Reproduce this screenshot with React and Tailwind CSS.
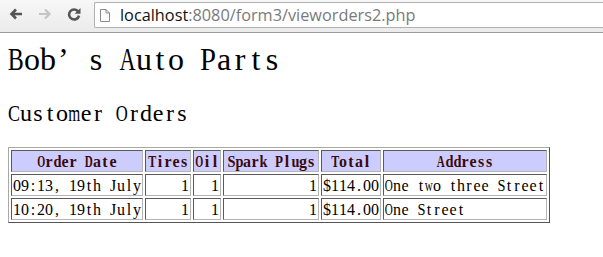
const W = {
  " ": 0.25, ":": 0.278, ",": 0.25, ".": 0.25, "$": 0.5,
  a: 0.444, b: 0.5, c: 0.444, d: 0.5, e: 0.444, g: 0.5, h: 0.5, i: 0.278, k: 0.5,
  l: 0.278, m: 0.778, n: 0.5, o: 0.5, p: 0.5, r: 0.333, s: 0.389, t: 0.278, u: 0.5,
  w: 0.722, y: 0.5,
  A: 0.722, B: 0.667, C: 0.667, D: 0.722, J: 0.389, O: 0.722, P: 0.556, S: 0.556, T: 0.611,
};
const WB = {
  a: 0.5, d: 0.556, e: 0.444, r: 0.444, s: 0.389, t: 0.333, i: 0.278, l: 0.278, o: 0.5,
  p: 0.556, k: 0.556, g: 0.5, u: 0.556,
  O: 0.778, D: 0.722, T: 0.667, S: 0.556, P: 0.611, A: 0.722,
};

function Mono({ text, bold }) {
  return [...text].map((ch, i) => {
    const w = (bold ? WB[ch] : undefined) ?? W[ch] ?? 0.5;
    if (ch === "’") {
      return (
        <span key={i} className="inline-block w-[1em] text-left pl-[0.06em]">
          {ch}
        </span>
      );
    }
    if (w > 0.5) {
      const s = 0.5 / w;
      const m = -(w - 0.5) / 2;
      return (
        <span key={i} className="inline-block w-[0.5em] text-center">
          <span
            className="inline-block"
            style={{ transform: `scaleX(${s.toFixed(3)})`, marginLeft: `${m.toFixed(3)}em`, marginRight: `${m.toFixed(3)}em` }}
          >
            {ch}
          </span>
        </span>
      );
    }
    return (
      <span key={i} className="inline-block w-[0.5em] text-center">
        {ch === " " ? "\u00a0" : ch}
      </span>
    );
  });
}

export default function App() {
  const serif = { fontFamily: '"Liberation Serif", "DejaVu Serif", serif' };
  const th =
    "bg-[#ccccff] text-[#3b0a0a] font-bold text-center whitespace-nowrap overflow-hidden border border-t-[#5a5a5a] border-l-[#5a5a5a] border-b-[#b4b4b4] border-r-[#b4b4b4] px-[1px] pt-[2px] pb-[1px] leading-[17px] text-[16px]";
  const td =
    "whitespace-nowrap overflow-hidden border border-t-[#5a5a5a] border-l-[#5a5a5a] border-b-[#b4b4b4] border-r-[#b4b4b4] px-[1px] pt-[2px] pb-[1px] leading-[17px] text-[16px] text-black";
  const rows = [
    ["09:13, 19th July", "1", "1", "1", "$114.00", "One two three Street"],
    ["10:20, 19th July", "1", "1", "1", "$114.00", "One Street"],
  ];
  const heads = [
    ["Order Date", "w-[132px]"],
    ["Tires", "w-[46px]"],
    ["Oil", "w-[28px]"],
    ["Spark Plugs", "w-[96px]"],
    ["Total", "w-[60px]"],
    ["Address", "w-[164px]"],
  ];
  const aligns = ["text-left", "text-right", "text-right", "text-right", "text-left", "text-left"];
  return (
    <div className="w-[603px] h-[257px] bg-white overflow-hidden">
      {/* browser toolbar */}
      <div className="h-[33px] border-b border-b-[#9c9c9c] bg-gradient-to-b from-[#f7f7f7] to-[#ebebeb] flex items-start">
        <div className="flex items-center h-[28px]">
          <svg width="14" height="12" viewBox="0 0 14 12" className="ml-[9px]">
            <path d="M13 6H3M7 1.5L2.5 6L7 10.5" fill="none" stroke="#555" strokeWidth="2.6" />
          </svg>
          <svg width="14" height="12" viewBox="0 0 14 12" className="ml-[15px]">
            <path d="M1 6H11M7 1.5L11.5 6L7 10.5" fill="none" stroke="#c4c4c4" strokeWidth="2.2" />
          </svg>
          <svg width="14" height="14" viewBox="0 0 14 14" className="ml-[15px]">
            <path d="M11.2 4.6A5 5 0 1 0 12 8.6" fill="none" stroke="#555" strokeWidth="2.6" />
            <path d="M13.5 1V6.8H7.7Z" fill="#555" />
          </svg>
        </div>
        <div className="ml-[13px] mt-[2px] h-[26px] flex-1 bg-white border border-[#b2b2b2] border-r-0 rounded-l-[2px] flex items-center">
          <svg width="10" height="13" viewBox="0 0 10 13" className="ml-[5px]">
            <path d="M0.5 0.5H6L9.5 4V12.5H0.5Z M6 0.5V4H9.5" fill="none" stroke="#8a8a8a" strokeWidth="1" />
          </svg>
          <span
            className="ml-[10px] text-[16.3px] leading-[20px] text-[#7a7a7a]"
            style={{ fontFamily: '"Open Sans", "Noto Sans", sans-serif' }}
          >
            <span className="text-[#111]">localhost</span>:8080/form3/vieworders2.php
          </span>
        </div>
      </div>

      {/* page */}
      <div className="px-2 text-black" style={serif}>
        <h1 className="mt-[10px] text-[32px] leading-[32px] font-normal whitespace-nowrap">
          <Mono text="Bob’s Auto Parts" />
        </h1>
        <h2 className="mt-[26px] text-[24px] leading-[24px] font-normal whitespace-nowrap">
          <Mono text="Customer Orders" />
        </h2>
        <table className="mt-[22px] table-fixed w-[542px] border-separate border-spacing-[2px] border border-t-[#a8a8a8] border-l-[#a8a8a8] border-b-[#555] border-r-[#555]">
          <thead>
            <tr>
              {heads.map(([h, w]) => (
                <th key={h} className={`${th} ${w}`}>
                  <Mono text={h} bold />
                </th>
              ))}
            </tr>
          </thead>
          <tbody>
            {rows.map((r, i) => (
              <tr key={i}>
                {r.map((c, j) => (
                  <td key={j} className={`${td} ${aligns[j]}`}>
                    <Mono text={c} />
                  </td>
                ))}
              </tr>
            ))}
          </tbody>
        </table>
      </div>
    </div>
  );
}
